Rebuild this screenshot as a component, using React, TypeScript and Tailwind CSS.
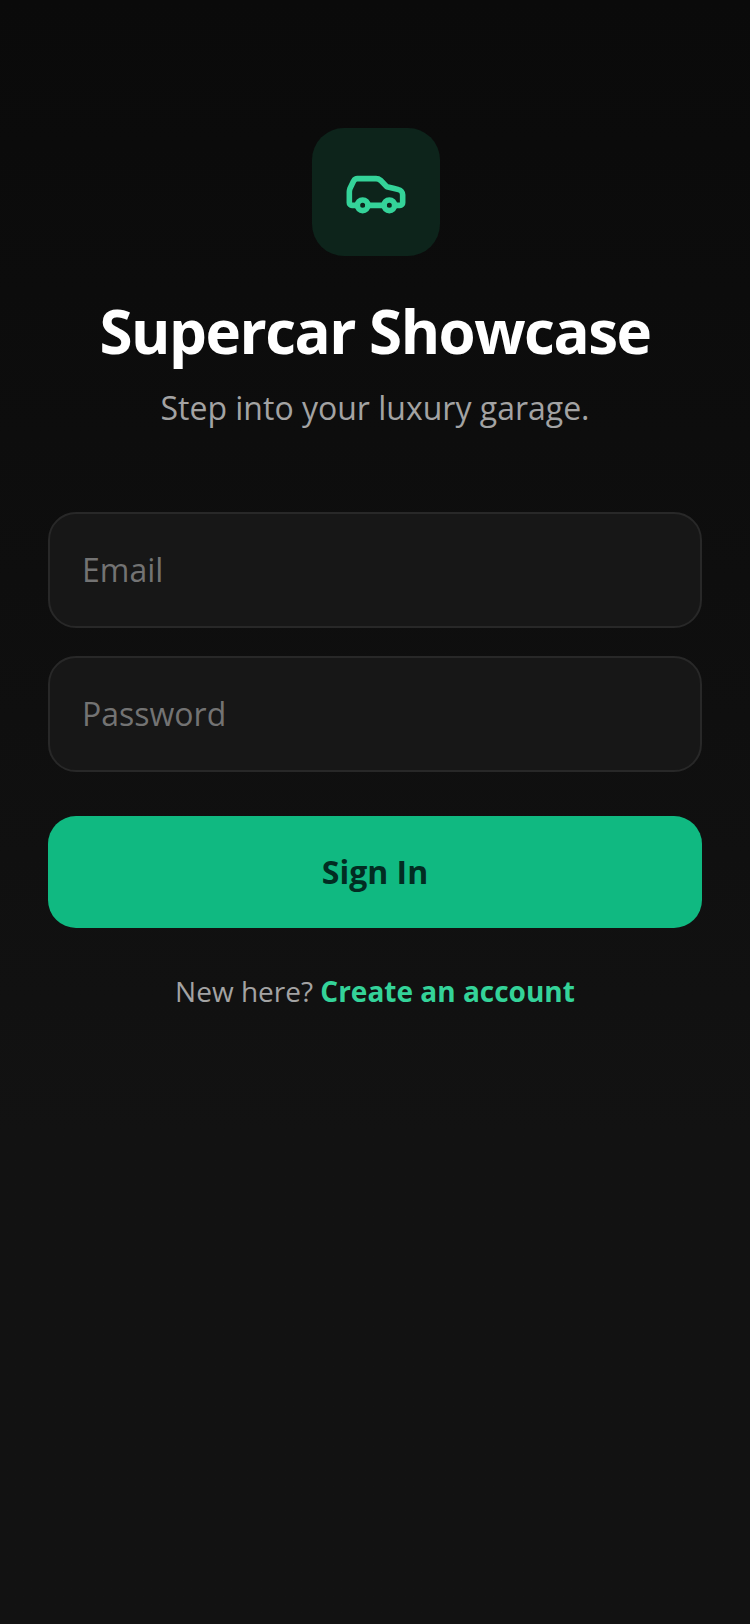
import React from 'react';
import { Car } from 'lucide-react';

const fieldClass =
  "w-full h-[116px] rounded-[28px] border-2 border-[#282828] bg-[#171717] px-[32px] pb-[2px] text-[32px] text-white placeholder:text-[#737373] outline-none";

const App = () => {
  return (
    <div className="min-h-[1624px] bg-gradient-to-b from-[#0a0a0a] to-[#121212] to-70% px-[48px] pt-[128px] font-['Open_Sans',sans-serif]">
      <div className="flex flex-col items-center">
        <div className="ml-[2px] flex h-[128px] w-[128px] items-center justify-center rounded-[32px] bg-[#0d241b]">
          <Car className="h-[64px] w-[64px] text-[#34d399]" strokeWidth={2.1} />
        </div>
        <h1 className="mt-[39px] text-[60px] leading-[72px] font-bold tracking-[-1.5px] text-white">
          Supercar Showcase
        </h1>
        <p className="mt-[17px] text-[32px] leading-[48px] text-[#a3a3a3]">
          Step into your luxury garage.
        </p>
      </div>

      <form className="mt-[80px] flex flex-col">
        <input className={fieldClass} placeholder="Email" />
        <input className={`${fieldClass} mt-[28px]`} placeholder="Password" type="password" />
        <button
          type="button"
          className="mt-[44px] h-[112px] w-full rounded-[28px] bg-[#10b981] text-[32px] font-bold text-[#022c22]"
        >
          Sign In
        </button>
      </form>

      <p className="mt-[43px] text-center text-[28px] leading-[40px] text-[#a3a3a3]">
        New here? <span className="font-bold text-[#34d399]">Create an account</span>
      </p>
    </div>
  );
};

export default App;
